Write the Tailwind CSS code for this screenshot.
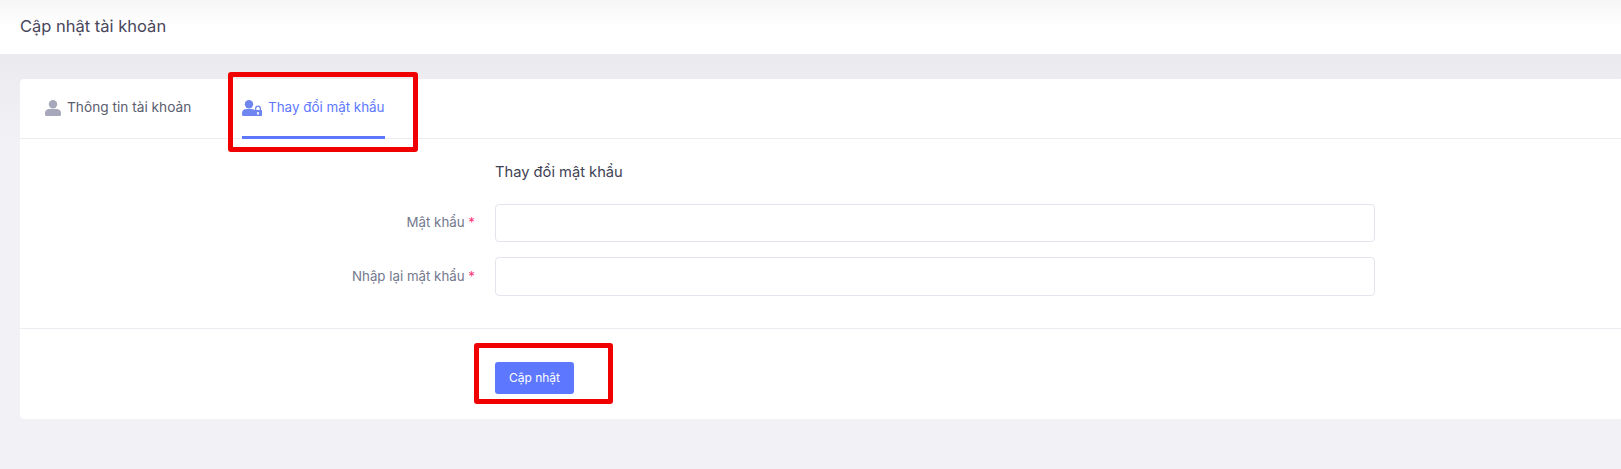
<!DOCTYPE html>
<html lang="vi">
<head>
  <meta charset="UTF-8" />
  <title>Cập nhật tài khoản</title>
  <script src="https://cdn.jsdelivr.net/npm/@tailwindcss/browser@4"></script>
</head>
<body class="h-[469px] overflow-hidden bg-[#f1f1f6] font-['Inter',sans-serif]">

  <!-- Subheader -->
  <header class="h-[54px] flex items-center pl-5 pb-[1px] bg-gradient-to-b from-[#f6f6f6] via-white via-50% to-white">
    <h1 class="text-[16.5px] font-normal text-[#48465b]">Cập nhật tài khoản</h1>
  </header>

  <main class="h-[415px] pt-[25px] pl-5 bg-gradient-to-b from-[#eaeaef] to-[#f1f1f6] to-[90px]">
    <div class="relative h-[340px] bg-white rounded-l-[4px]">

      <!-- Tabs -->
      <nav class="h-[60px] flex border-b border-[#ebedf2]">
        <a class="ml-[25px] w-[197px] h-[59px] pb-[2px] flex items-center gap-[6px] text-[13.7px] text-[#595d6e]">
          <svg class="w-[16px] h-[16px]" viewBox="0 0 16 16" fill="#a7a8bb">
            <circle cx="8" cy="4.2" r="4.2" />
            <path d="M0 13c0-2.500 2-4 4.500-4h7c2.500 0 4.500 1.500 4.500 4v1.500c0 .9-.6 1.500-1.500 1.500h-13C.6 16 0 15.400 0 14.500z" />
          </svg>
          Thông tin tài khoản
        </a>
        <a class="w-[143px] h-[60px] flex items-center gap-[6px] border-b-[3px] border-[#5d78ff] text-[13.4px] text-[#5d78ff]">
          <svg class="w-[20px] h-[16px]" viewBox="0 0 20 16" fill="#6f86f0">
            <circle cx="7" cy="4.200" r="4.200" />
            <path d="M0 13c0-2.500 2-4 4.500-4h5c.9 0 1.700.2 2.500.6V16H1.500C.6 16 0 15.400 0 14.500z" />
            <path fill-rule="evenodd" d="M13 10V8.500a3 3 0 0 1 6 0V10h1v6h-8v-6zm1.300 0h3.400V8.500a1.700 1.700 0 0 0-3.400 0zM16 12a1 1 0 0 0-.5 1.900V15h1v-1.100A1 1 0 0 0 16 12z" />
          </svg>
          Thay đổi mật khẩu
        </a>
      </nav>

      <!-- Form -->
      <section class="h-[190px] pt-[25px] border-b border-[#ebedf2]">
        <div class="flex h-[17px] mb-[23px]">
          <div class="w-[475px]"></div>
          <h3 class="text-[14.7px] leading-[17px] font-normal text-[#3f4254]">Thay đổi mật khẩu</h3>
        </div>
        <div class="flex items-center h-[38px] mb-[15px]">
          <label class="w-[455px] text-right text-[13.3px] text-[#74788d]">Mật khẩu <span class="text-[#fd397a]">*</span></label>
          <input type="password" class="ml-5 w-[880px] h-[38px] border border-[#e2e5ec] rounded-[4px] bg-white" />
        </div>
        <div class="flex items-center h-[39px]">
          <label class="w-[455px] text-right text-[13.3px] text-[#74788d]">Nhập lại mật khẩu <span class="text-[#fd397a]">*</span></label>
          <input type="password" class="ml-5 w-[880px] h-[39px] border border-[#e2e5ec] rounded-[4px] bg-white" />
        </div>
      </section>

      <!-- Actions -->
      <div class="pt-[33px] pl-[475px]">
        <button class="w-[79px] h-[32px] bg-[#5d78ff] rounded-[3px] text-white text-[12px]">Cập nhật</button>
      </div>

      <!-- Red annotations -->
      <div class="absolute left-[208px] top-[-7px] w-[190px] h-[80px] border-[5px] border-[#f00000] rounded-[3px]"></div>
      <div class="absolute left-[454px] top-[264px] w-[139px] h-[61px] border-[5px] border-[#f00000] rounded-[3px]"></div>
    </div>
  </main>
</body>
</html>
